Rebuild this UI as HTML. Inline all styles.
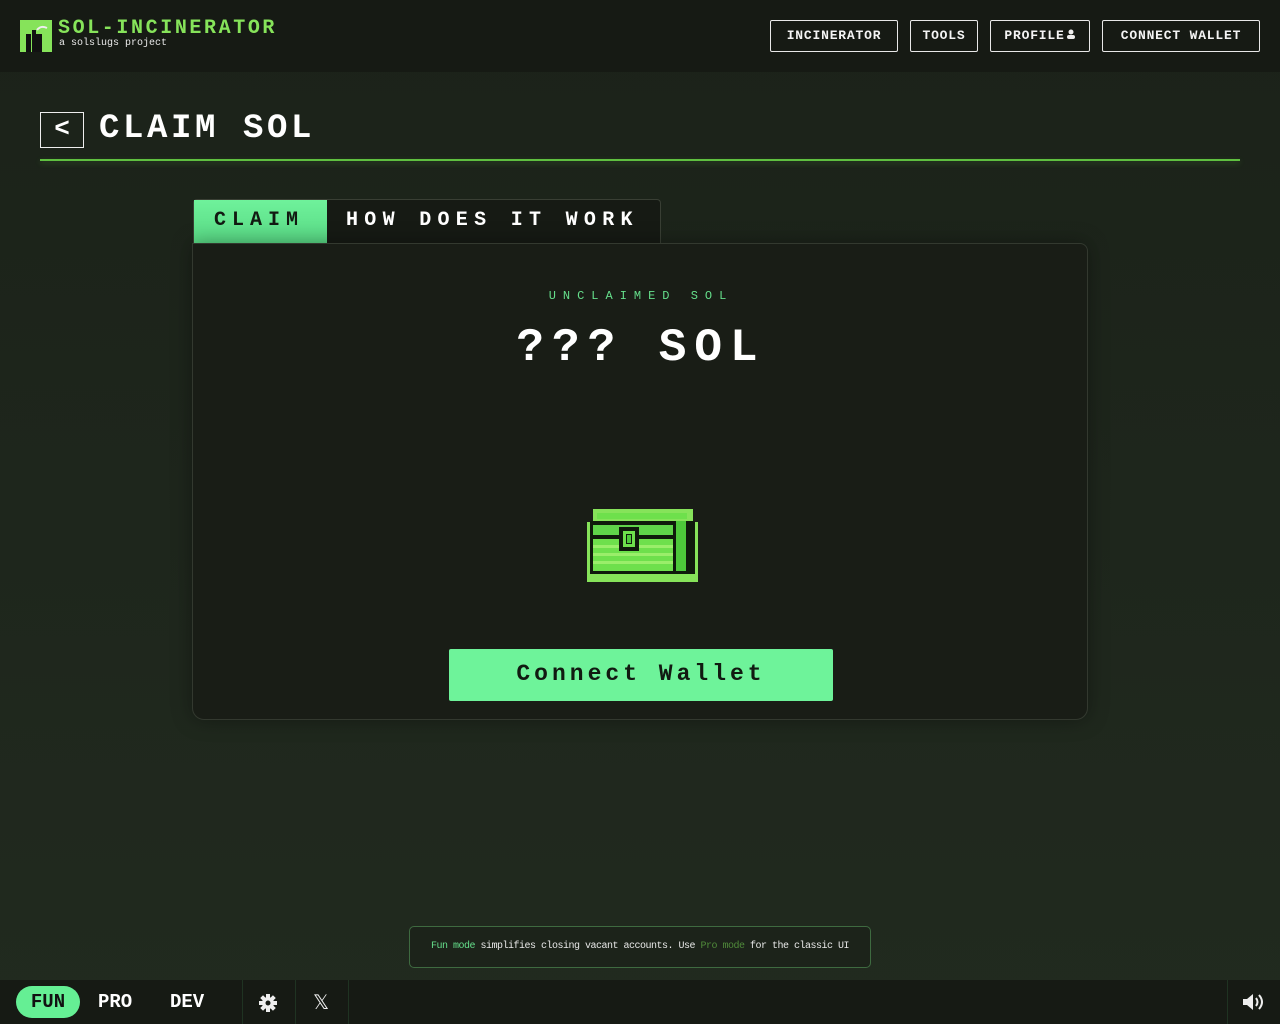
<!DOCTYPE html>
<html><head><meta charset="utf-8"><style>
*{margin:0;padding:0;box-sizing:border-box}
body{width:1280px;height:1024px;overflow:hidden;background:linear-gradient(#1b2219,#212a1f);font-family:"Liberation Mono",monospace;color:#fff;position:relative}
.hdr{position:absolute;left:0;top:0;width:1280px;height:72px;background:#161a14}
.logo{position:absolute;left:20px;top:20px;width:32px;height:32px;background:#86e35a}
.t1{position:absolute;left:58px;top:17px;font-weight:bold;font-size:20px;color:#86e35a;letter-spacing:2.6px}
.t2{position:absolute;left:59px;top:38px;font-size:10px;color:#e8e8e8}
.nb{position:absolute;top:20px;height:32px;border:1.5px solid #e8e8e8;border-radius:2px;font-weight:bold;font-size:13px;line-height:29px;text-align:center;letter-spacing:.8px;color:#f4f4f4}
.back{position:absolute;left:40px;top:112px;width:44px;height:36px;border:1.5px solid #eee;text-align:center;font-size:26px;line-height:32px;font-weight:bold}
.title{position:absolute;left:99px;top:110px;font-size:34px;font-weight:bold;letter-spacing:3.6px}
.line{position:absolute;left:40px;top:159px;width:1200px;height:2px;background:#5fc040;box-shadow:0 2px 6px rgba(95,192,64,.3)}
.tabs{position:absolute;left:193px;top:199px;width:468px;height:44px;border:1px solid #393f34;border-bottom:none;border-radius:4px 4px 0 0;background:#161a14}
.tab1{position:absolute;left:0;top:0;width:133px;height:44px;background:linear-gradient(#6ff29b,#58d884);color:#121a12;font-weight:bold;font-size:20px;letter-spacing:6px;line-height:42px;padding-left:20px}
.tab2{position:absolute;left:152px;top:0;font-weight:bold;font-size:20px;letter-spacing:6.3px;line-height:42px}
.card{position:absolute;left:192px;top:243px;width:896px;height:477px;background:#191d16;border:1px solid #33392f;border-radius:0 8px 12px 12px;box-shadow:0 0 20px rgba(0,0,0,.35)}
.unc{position:absolute;left:0;width:896px;top:45px;text-align:center;font-size:12px;color:#65df8b;letter-spacing:7px}
.amt{position:absolute;left:0;width:896px;top:78px;text-align:center;font-size:46px;font-weight:bold;letter-spacing:8px}
.btn{position:absolute;left:256px;top:405px;width:384px;height:52px;background:#6ef39a;border-radius:2px;color:#111a11;font-weight:bold;font-size:23px;text-align:center;line-height:50px;letter-spacing:4px}
.note{position:absolute;left:409px;top:926px;width:462px;height:42px;border:1px solid #3e6a40;border-radius:5px;background:#1c231a;font-size:10px;letter-spacing:-0.5px;line-height:40px;text-align:center;color:#e8e8e8}
.foot{position:absolute;left:0;top:980px;width:1280px;height:44px;background:#161a14}
.sep{position:absolute;top:0;width:1px;height:44px;background:#1f3322}
.fun{position:absolute;left:16px;top:6px;width:64px;height:32px;border-radius:16px;background:#65ef94;color:#111;font-weight:bold;font-size:19px;text-align:center;line-height:32px}
.m{position:absolute;top:6px;font-weight:bold;font-size:19px;line-height:32px}
</style></head><body>
<div class="hdr">
<div class="logo"><svg width="32" height="32"><rect x="6" y="14" width="5" height="18" fill="#111"/><rect x="12" y="10" width="4" height="22" fill="#111"/><rect x="16" y="14" width="6" height="18" fill="#111"/><path d="M17 10 q4 -5 10 -2" stroke="#eee" stroke-width="2" fill="none"/></svg></div>
<div class="t1">SOL-INCINERATOR</div>
<div class="t2">a solslugs project</div>
<div class="nb" style="left:770px;width:128px">INCINERATOR</div>
<div class="nb" style="left:910px;width:68px">TOOLS</div>
<div class="nb" style="left:990px;width:100px">PROFILE<svg width="10" height="10" style="margin-left:1px"><circle cx="5" cy="3" r="2.5" fill="#eee"/><rect x="1" y="6" width="8" height="4" rx="2" fill="#eee"/></svg></div>
<div class="nb" style="left:1102px;width:158px">CONNECT WALLET</div>
</div>
<div class="back">&lt;</div>
<div class="title">CLAIM SOL</div>
<div class="line"></div>
<div class="tabs"><div class="tab1">CLAIM</div><div class="tab2">HOW DOES IT WORK</div></div>
<div class="card">
<div class="unc">UNCLAIMED SOL</div>
<div class="amt">??? SOL</div>
<svg style="position:absolute;left:394px;top:265px" width="111" height="73" viewBox="0 0 111 73">
<rect x="0" y="13" width="111" height="60" fill="#86e35a"/>
<rect x="6" y="0" width="100" height="16" fill="#86e35a"/>
<rect x="3" y="12" width="105" height="56" fill="#0f1a0c"/>
<rect x="6" y="16" width="80" height="10" fill="#5fd44a"/>
<rect x="6" y="30" width="80" height="32" fill="#6ee04c"/>
<rect x="6" y="36" width="80" height="3" fill="#9aee6a"/><rect x="6" y="44" width="80" height="3" fill="#9aee6a"/><rect x="6" y="52" width="80" height="3" fill="#9aee6a"/>
<rect x="89" y="12" width="10" height="50" fill="#4dc93a"/>
<rect x="10" y="4" width="90" height="6" fill="#6ee04c"/>
<rect x="32" y="18" width="20" height="24" fill="#0f1a0c"/>
<rect x="36" y="22" width="12" height="16" fill="#6ee04c"/>
<rect x="39" y="25" width="6" height="10" fill="#0f1a0c"/><rect x="40" y="26" width="4" height="8" fill="#4dc93a"/>
<rect x="3" y="65" width="105" height="4" fill="#86e35a"/>
</svg>
<div class="btn">Connect Wallet</div>
</div>
<div class="note"><span style="color:#65df8b">Fun mode</span> simplifies closing vacant accounts. Use <span style="color:#4f8a3a">Pro mode</span> for the classic UI</div>
<div class="foot">
<div class="fun">FUN</div>
<div class="m" style="left:98px">PRO</div>
<div class="m" style="left:170px">DEV</div>
<div class="sep" style="left:242px"></div>
<svg style="position:absolute;left:259px;top:14px" width="18" height="18" viewBox="0 0 18 18"><g fill="#eee"><circle cx="9" cy="9" r="6"/><rect x="7" y="0" width="4" height="18"/><rect x="0" y="7" width="18" height="4"/><rect x="7" y="0" width="4" height="18" transform="rotate(45 9 9)"/><rect x="7" y="0" width="4" height="18" transform="rotate(-45 9 9)"/></g><circle cx="9" cy="9" r="2.5" fill="#161a14"/></svg>
<div class="sep" style="left:295px"></div>
<div style="position:absolute;left:313px;top:10px;font-size:20px;color:#eee">𝕏</div>
<div class="sep" style="left:348px"></div>
<div class="sep" style="left:1227px"></div>
<svg style="position:absolute;left:1242px;top:13px" width="24" height="18" viewBox="0 0 24 18"><path d="M1 6h4l6-5v16l-6-5H1z" fill="#eee"/><path d="M14 5q3 4 0 8M17 2q6 7 0 14" stroke="#eee" stroke-width="2" fill="none"/></svg>
</div>
</body></html>
